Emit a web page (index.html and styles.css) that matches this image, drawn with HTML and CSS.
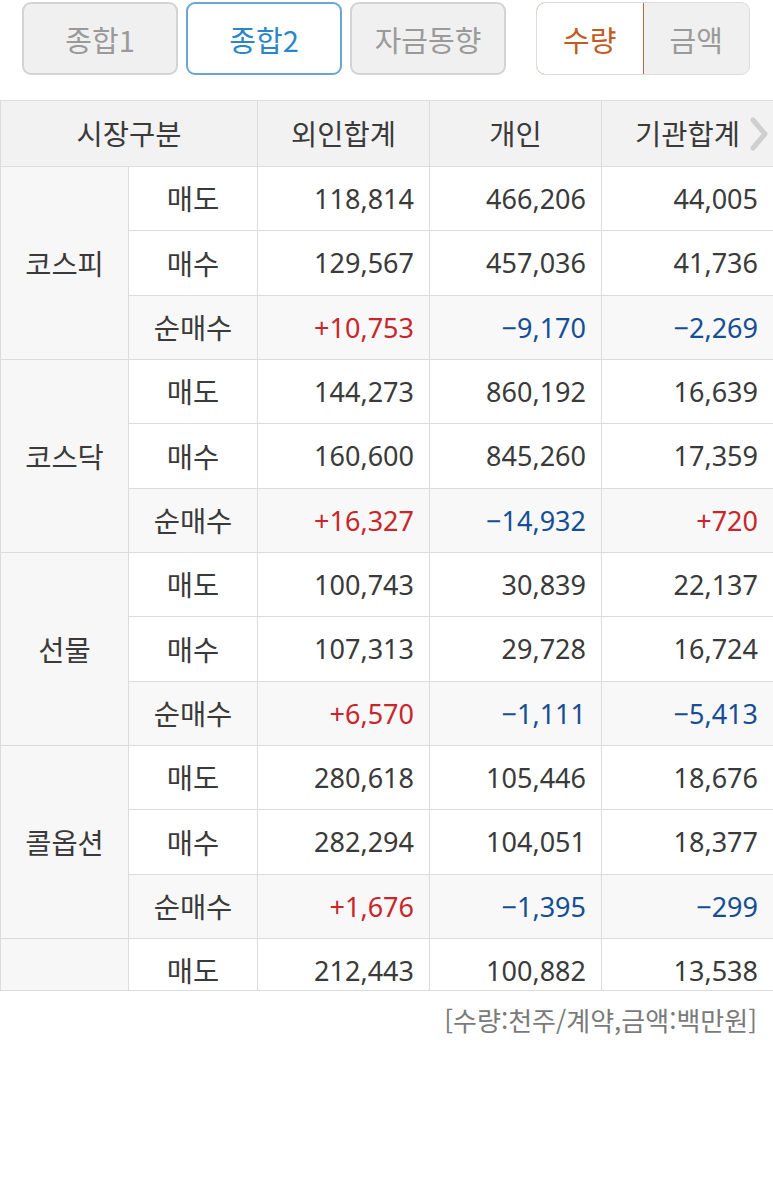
FILE: index.html
```html
<!DOCTYPE html>
<html lang="ko">
<head>
<meta charset="utf-8">
<link rel="stylesheet" href="styles.css">
</head>
<body>
<div class="tabs">
  <div class="tab">종합1</div>
  <div class="tab tab-on">종합2</div>
  <div class="tab">자금동향</div>
  <div class="seg">
    <div class="seg-item seg-on">수량</div>
    <div class="seg-item">금액</div>
  </div>
</div>
<div class="table-wrap">
<table class="grid">
  <colgroup>
    <col class="c1"><col class="c2"><col class="c3"><col class="c3"><col class="c3">
  </colgroup>
  <thead>
    <tr>
      <th colspan="2">시장구분</th>
      <th>외인합계</th>
      <th>개인</th>
      <th class="last">기관합계
        <svg class="chev" width="20" height="34" viewBox="0 0 20 34"><path d="M4 3 L16 17 L4 31" fill="none" stroke="#cfcfcf" stroke-width="5" stroke-linejoin="round" stroke-linecap="round"/></svg>
      </th>
    </tr>
  </thead>
  <tbody>
    <tr><td class="mk" rowspan="3">코스피</td><td class="kind">매도</td><td>118,814</td><td>466,206</td><td>44,005</td></tr>
    <tr><td class="kind">매수</td><td>129,567</td><td>457,036</td><td>41,736</td></tr>
    <tr class="net"><td class="kind">순매수</td><td class="up">+10,753</td><td class="dn">−9,170</td><td class="dn">−2,269</td></tr>

    <tr><td class="mk" rowspan="3">코스닥</td><td class="kind">매도</td><td>144,273</td><td>860,192</td><td>16,639</td></tr>
    <tr><td class="kind">매수</td><td>160,600</td><td>845,260</td><td>17,359</td></tr>
    <tr class="net"><td class="kind">순매수</td><td class="up">+16,327</td><td class="dn">−14,932</td><td class="up">+720</td></tr>

    <tr><td class="mk" rowspan="3">선물</td><td class="kind">매도</td><td>100,743</td><td>30,839</td><td>22,137</td></tr>
    <tr><td class="kind">매수</td><td>107,313</td><td>29,728</td><td>16,724</td></tr>
    <tr class="net"><td class="kind">순매수</td><td class="up">+6,570</td><td class="dn">−1,111</td><td class="dn">−5,413</td></tr>

    <tr><td class="mk" rowspan="3">콜옵션</td><td class="kind">매도</td><td>280,618</td><td>105,446</td><td>18,676</td></tr>
    <tr><td class="kind">매수</td><td>282,294</td><td>104,051</td><td>18,377</td></tr>
    <tr class="net"><td class="kind">순매수</td><td class="up">+1,676</td><td class="dn">−1,395</td><td class="dn">−299</td></tr>

    <tr class="tail"><td class="mk"></td><td class="kind">매도</td><td>212,443</td><td>100,882</td><td>13,538</td></tr>
  </tbody>
</table>
</div>
<p class="note">[수량:천주/계약,금액:백만원]</p>
</body>
</html>
```

FILE: styles.css
```css
* { box-sizing: border-box; }
html, body { margin: 0; padding: 0; background: #fff; }
body {
  font-family: "Noto Sans", "Noto Sans CJK KR", sans-serif;
  color: #3a3a3a;
  width: 773px;
  overflow: hidden;
}
.tabs {
  display: flex;
  align-items: flex-start;
  padding: 2px 0 0 22px;
  height: 100px;
}
.tab {
  width: 156px;
  height: 73px;
  margin-right: 8px;
  border: 2px solid #d3d3d3;
  border-radius: 9px;
  background: #f0f0f0;
  color: #9a9a9a;
  font-size: 29px;
  display: flex;
  align-items: center;
  justify-content: center;
  font-family: "Noto Sans CJK KR", "Noto Sans", sans-serif;
}
.tab-on {
  background: #fff;
  border-color: #6aa5d6;
  color: #2b86c8;
}
.seg {
  display: flex;
  margin-left: 22px;
  width: 214px;
  height: 73px;
  border: 1px solid #dcdcdc;
  border-radius: 9px;
  background: #f0f0f0;
  overflow: hidden;
}
.seg-item {
  flex: 1;
  display: flex;
  align-items: center;
  justify-content: center;
  font-size: 29px;
  color: #9a9a9a;
  font-family: "Noto Sans CJK KR", "Noto Sans", sans-serif;
}
.seg-on {
  background: #fff;
  border: 1px solid #c0693a;
  border-radius: 9px 0 0 9px;
  margin: -1px 0 -1px -1px;
  color: #c25a22;
}
.table-wrap {
  height: 891px;
  overflow: hidden;
  border-bottom: 1px solid #dcdcdc;
}
.grid {
  border-collapse: collapse;
  table-layout: fixed;
  width: 773px;
}
.c1 { width: 128px; }
.c2 { width: 129px; }
.c3 { width: 172px; }
.grid th, .grid td {
  border: 1px solid #dcdcdc;
  padding: 0;
  font-size: 27px;
  line-height: 1;
}
.grid th {
  height: 66px;
  background: #f2f2f2;
  font-weight: normal;
  color: #3a3a3a;
  font-size: 28.5px;
  font-family: "Noto Sans CJK KR", "Noto Sans", sans-serif;
  text-align: center;
}
.grid th.last { position: relative; }
.chev {
  position: absolute;
  right: 4px;
  top: 16px;
}
.grid td {
  height: 64.33px;
  text-align: right;
  padding-right: 15px;
}
.grid td.mk, .grid td.kind {
  text-align: center;
  padding-right: 0;
  font-size: 28.5px;
  font-family: "Noto Sans CJK KR", "Noto Sans", sans-serif;
}
.grid td.mk { background: #f7f7f7; }
.net td { background: #f8f8f8; }
.up { color: #c8262b; }
.dn { color: #164e94; }
.note {
  margin: 10px 16px 0 0;
  text-align: right;
  font-size: 26px;
  color: #7a7a7a;
  font-family: "Noto Sans CJK KR", "Noto Sans", sans-serif;
}
```
